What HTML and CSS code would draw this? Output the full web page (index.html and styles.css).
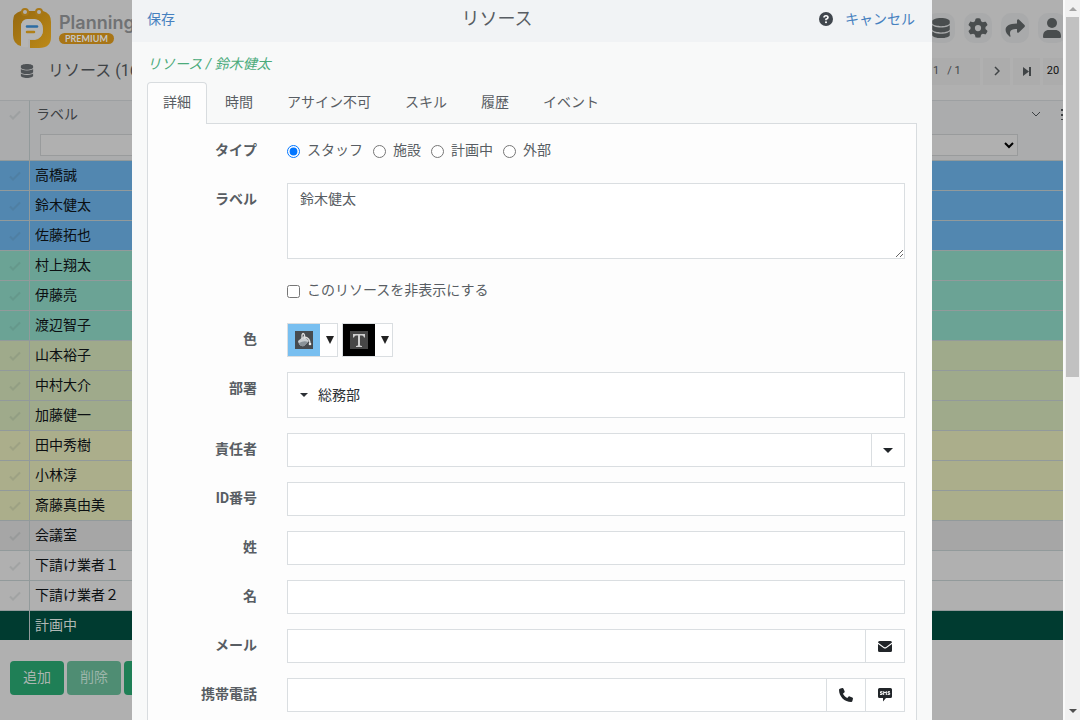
FILE: index.html
```html
<!DOCTYPE html>
<html lang="ja">
<head>
<meta charset="utf-8">
<title>リソース</title>
<link rel="stylesheet" href="styles.css">
</head>
<body>
<svg class="defs" aria-hidden="true">
  <symbol id="db" viewBox="0 0 448 512"><path d="M448 80v48c0 44.200-100.300 80-224 80S0 172.200 0 128V80C0 35.800 100.300 0 224 0s224 35.800 224 80zM393.200 214.700c20.800-7.400 39.900-16.900 54.800-28.600V288c0 44.200-100.300 80-224 80S0 332.200 0 288V186.100c14.900 11.800 34 21.200 54.800 28.600C99.700 230.700 159.500 240 224 240s124.300-9.300 169.200-25.300zM0 346.100c14.900 11.800 34 21.200 54.800 28.600C99.700 390.700 159.500 400 224 400s124.300-9.300 169.200-25.300c20.800-7.400 39.900-16.900 54.800-28.600V432c0 44.200-100.300 80-224 80S0 476.200 0 432V346.100z"/></symbol>
  <symbol id="check" viewBox="0 0 14 12"><path d="M2 6.500 5 9.500 12 2.500" fill="none" stroke="currentColor" stroke-width="2"/></symbol>
</svg>
<div class="window">
  <div class="app">
    <header class="topbar">
      <div class="brand">
        <svg class="logo" viewBox="0 0 38 40" aria-hidden="true">
          <defs><linearGradient id="gold" x1="0" y1="0" x2="1" y2="1"><stop offset="0" stop-color="#95680f"/><stop offset="1" stop-color="#bd8a18"/></linearGradient></defs>
          <path d="M8 3H30Q38 5 38 14V29Q38 40 26 40H17V32H22Q30 30 30 21.500 30 12 21 11H15Q8 12 8 19V38Q0 36 0 27V13Q0 5 8 3Z" fill="url(#gold)"/>
          <path d="M8 38V19Q8 11 15 11H21Q30 12 30 21.500 30 31 21 31H15V39Q10 40 8 38Z" fill="#b5b5b5"/>
          <circle cx="12" cy="4" r="3" fill="#b0b0b0" stroke="#a87818" stroke-width="2"/><circle cx="26" cy="4" r="3" fill="#b0b0b0" stroke="#a87818" stroke-width="2"/>
          <path d="M14 18.500H24" stroke="#2d6ca3" stroke-width="2.500" stroke-linecap="round"/><path d="M14 24H21" stroke="#b08018" stroke-width="2.500" stroke-linecap="round"/>
        </svg>
        <div class="brand-text"><span class="brand-name">Planning</span><span class="premium">PREMIUM</span></div>
      </div>
      <nav class="tools" aria-label="ツール">
        <button aria-label="データ"><svg width="18" height="20"><use href="#db"/></svg></button>
        <button aria-label="設定"><svg width="20" height="20" viewBox="0 0 512 512"><path fill-rule="evenodd" d="M495.900 166.600c3.200 8.700 .5 18.400-6.400 24.600l-43.300 39.400c1.100 8.300 1.700 16.800 1.700 25.400s-.6 17.100-1.700 25.400l43.300 39.400c6.900 6.200 9.600 15.900 6.400 24.600-8 24-22 46-37 66-6 7-16 10-25 7l-55.700-17.700c-13.400 10.300-28.200 18.900-44 25.400l-12.500 57.100c-2 9.100-9 16.300-18.200 17.800-32 5-63 5-95 0-9.200-1.500-16.200-8.700-18.200-17.800l-12.500-57.100c-15.800-6.500-30.600-15.100-44-25.400L78 419c-9 3-19 0-25-7-16-20-28-42-37-66-3.200-8.700-.5-18.400 6.400-24.600l43.300-39.400C64.600 273.100 64 264.600 64 256s.6-17.100 1.700-25.400L22.400 191.200c-6.900-6.200-9.600-15.900-6.400-24.600 9-24 21-46 37-66 6-7 16-10 25-7l55.700 17.700c13.400-10.300 28.200-18.900 44-25.400l12.500-57.100c2-9.100 9-16.300 18.200-17.800 32-5 63-5 95 0 9.200 1.500 16.200 8.700 18.200 17.800l12.500 57.100c15.800 6.500 30.600 15.100 44 25.400L434 94c9-3 19 0 25 7 15 19 28 41 36.900 65.600zM256 336a80 80 0 1 0 0-160 80 80 0 1 0 0 160z"/></svg></button>
        <button aria-label="共有"><svg width="20" height="18" viewBox="0 0 20 18"><path d="M12.500 .5Q13 0 13.800 .5L19.500 6Q20.300 7 19.500 8L13.800 13.500Q12 14.500 12 12.500V10C6 10 4 12 5.500 17 5.500 18 5 18 4.500 17.500-2 12-1 4.500 12 4.500V1.500Z"/></svg></button>
        <button aria-label="ユーザー"><svg width="18" height="20" viewBox="0 0 18 20"><circle cx="9" cy="5" r="5"/><path d="M0 19C0 14 2 12 6 12H12C16 12 18 14 18 19Q18 20 17 20H1Q0 20 0 19Z"/></svg></button>
      </nav>
    </header>
    <div class="subbar">
      <h1><svg class="db-small" width="14" height="14"><use href="#db"/></svg>リソース (16)</h1>
      <div class="pager">
        <span class="cell page"><b>1</b> / 1</span>
        <button class="cell" aria-label="次へ"><svg width="6" height="10" viewBox="0 0 6 10"><path d="M1 1 5 5 1 9" fill="none" stroke="currentColor" stroke-width="1.500"/></svg></button>
        <button class="cell" aria-label="最後へ"><svg width="8" height="9" viewBox="0 0 8 9"><path d="M0 0 6 4.500 0 9ZM6 0H8V9H6Z"/></svg></button>
        <span class="cell size">20</span>
      </div>
    </div>
    <table class="resources">
      <thead>
        <tr>
          <th class="pick"><svg width="14" height="12"><use href="#check"/></svg></th>
          <th><label for="filter">ラベル</label><input id="filter" type="text"></th>
          <th><div class="head-icons"><svg width="10" height="6" viewBox="0 0 10 6"><path d="M1 1 5 5 9 1" fill="none" stroke="currentColor"/></svg><svg width="2" height="12" viewBox="0 0 2 12"><path d="M1 1V12" stroke="currentColor" stroke-width="2" stroke-dasharray="2 3"/></svg></div><select aria-label="絞り込み"><option></option></select></th>
        </tr>
      </thead>
      <tbody>
        <tr class="blue"><td class="pick"><svg width="14" height="12"><use href="#check"/></svg></td><td colspan="2">高橋誠</td></tr>
        <tr class="blue"><td class="pick"><svg width="14" height="12"><use href="#check"/></svg></td><td colspan="2">鈴木健太</td></tr>
        <tr class="blue"><td class="pick"><svg width="14" height="12"><use href="#check"/></svg></td><td colspan="2">佐藤拓也</td></tr>
        <tr class="teal"><td class="pick"><svg width="14" height="12"><use href="#check"/></svg></td><td colspan="2">村上翔太</td></tr>
        <tr class="teal"><td class="pick"><svg width="14" height="12"><use href="#check"/></svg></td><td colspan="2">伊藤亮</td></tr>
        <tr class="teal"><td class="pick"><svg width="14" height="12"><use href="#check"/></svg></td><td colspan="2">渡辺智子</td></tr>
        <tr class="green"><td class="pick"><svg width="14" height="12"><use href="#check"/></svg></td><td colspan="2">山本裕子</td></tr>
        <tr class="green"><td class="pick"><svg width="14" height="12"><use href="#check"/></svg></td><td colspan="2">中村大介</td></tr>
        <tr class="green"><td class="pick"><svg width="14" height="12"><use href="#check"/></svg></td><td colspan="2">加藤健一</td></tr>
        <tr class="yellow"><td class="pick"><svg width="14" height="12"><use href="#check"/></svg></td><td colspan="2">田中秀樹</td></tr>
        <tr class="yellow"><td class="pick"><svg width="14" height="12"><use href="#check"/></svg></td><td colspan="2">小林淳</td></tr>
        <tr class="yellow"><td class="pick"><svg width="14" height="12"><use href="#check"/></svg></td><td colspan="2">斎藤真由美</td></tr>
        <tr class="gray"><td class="pick"><svg width="14" height="12"><use href="#check"/></svg></td><td colspan="2">会議室</td></tr>
        <tr><td class="pick"><svg width="14" height="12"><use href="#check"/></svg></td><td colspan="2">下請け業者１</td></tr>
        <tr><td class="pick"><svg width="14" height="12"><use href="#check"/></svg></td><td colspan="2">下請け業者２</td></tr>
        <tr class="dark"><td class="pick"></td><td colspan="2">計画中</td></tr>
      </tbody>
    </table>
    <div class="actions"><button>追加</button><button disabled>削除</button><button aria-label="その他"></button></div>
  </div>

  <section class="dialog" role="dialog" aria-labelledby="dialog-title">
    <header class="dialog-head">
      <a href="#save">保存</a>
      <h2 id="dialog-title">リソース</h2>
      <div class="head-end">
        <svg width="14" height="14" viewBox="0 0 14 14" aria-hidden="true"><circle cx="7" cy="7" r="7" fill="#40464d"/><path d="M5 5.500Q5 3.700 7 3.700T9 5.500Q9 6.500 7 7.200V8.300" fill="none" stroke="#fff" stroke-width="1.600"/><circle cx="7" cy="10.300" r="1" fill="#fff"/></svg>
        <a href="#cancel">キャンセル</a>
      </div>
    </header>
    <div class="dialog-body">
      <p class="crumb">リソース / 鈴木健太</p>
      <nav class="tabs">
        <a class="active" href="#detail">詳細</a><a href="#time">時間</a><a href="#off">アサイン不可</a><a href="#skill">スキル</a><a href="#history">履歴</a><a href="#event">イベント</a>
      </nav>
      <form class="panel">
        <div class="row">
          <span class="name" id="type">タイプ</span>
          <div class="choices" role="radiogroup" aria-labelledby="type">
            <label><input type="radio" name="type" checked>スタッフ</label>
            <label><input type="radio" name="type">施設</label>
            <label><input type="radio" name="type">計画中</label>
            <label><input type="radio" name="type">外部</label>
          </div>
        </div>
        <div class="row"><label class="name" for="label">ラベル</label><textarea id="label" class="box">鈴木健太</textarea></div>
        <div class="row"><span></span><div class="choices"><label><input type="checkbox">このリソースを非表示にする</label></div></div>
        <div class="row">
          <span class="name">色</span>
          <div class="colors">
            <button type="button" class="picker" aria-label="背景色"><span class="swatch fill"><svg width="18" height="18" viewBox="0 0 18 18"><path d="M0 0H18V18H0Z" fill="#474b4f"/><path d="M3 10 9 5 14 10 9 15Q4 16 3 10Z" fill="#c9cdd0"/><path d="M4 12Q9 9 13 11L9 15Q5 16 4 12Z" fill="#8a9298"/><path d="M7 8V4Q8 1 9.500 4V8M10 6Q15 7 15 13" fill="none" stroke="#ddd" stroke-width="1.300"/><circle cx="15" cy="13" r="1.300" fill="#eee"/></svg></span><span class="drop"><svg width="8" height="8" viewBox="0 0 8 8"><path d="M0 0H8L4 8Z"/></svg></span></button>
            <button type="button" class="picker" aria-label="文字色"><span class="swatch ink"><svg width="18" height="18" viewBox="0 0 18 18"><path d="M0 0H18V18H0Z" fill="#474747"/><path d="M3 3H15V6.500H14Q13.500 4.500 12 4.500H10V14Q10 15 12 15V16H6V15Q8 15 8 14V4.500H6Q4.500 4.500 4 6.500H3Z" fill="#d0d0d0"/></svg></span><span class="drop"><svg width="8" height="8" viewBox="0 0 8 8"><path d="M0 0H8L4 8Z"/></svg></span></button>
          </div>
        </div>
        <div class="row"><span class="name">部署</span><button type="button" class="box tree"><svg width="8" height="4" viewBox="0 0 8 4"><path d="M0 0H8L4 4Z"/></svg>総務部</button></div>
        <div class="row"><label class="name" for="owner">責任者</label><div class="group"><input id="owner" class="box" type="text"><button type="button" class="box narrow" aria-label="選択"><svg width="10" height="5" viewBox="0 0 10 5"><path d="M0 0H10L5 5Z"/></svg></button></div></div>
        <div class="row"><label class="name" for="code">ID番号</label><input id="code" class="box" type="text"></div>
        <div class="row"><label class="name" for="last">姓</label><input id="last" class="box" type="text"></div>
        <div class="row"><label class="name" for="first">名</label><input id="first" class="box" type="text"></div>
        <div class="row"><label class="name" for="mail">メール</label><div class="group"><input id="mail" class="box" type="email"><button type="button" class="box addon" aria-label="メール送信"><svg width="14" height="11" viewBox="0 0 14 11"><path d="M1.500 0H12.500Q14 0 14 1.500L8 6Q7 6.700 6 6L0 1.500Q0 0 1.500 0ZM0 3 5.500 7Q7 8 8.500 7L14 3V9.500Q14 11 12.500 11H1.500Q0 11 0 9.500Z"/></svg></button></div></div>
        <div class="row"><label class="name" for="mobile">携帯電話</label><div class="group"><input id="mobile" class="box" type="tel"><button type="button" class="box addon" aria-label="電話"><svg width="14" height="14" viewBox="0 0 512 512"><path d="M164.900 24.600c-7.700-18.600-28-28.500-47.400-23.200l-88 24C12.100 30.200 0 46 0 64c0 247.400 200.600 448 448 448 18 0 33.800-12.100 38.600-29.500l24-88c5.300-19.400-4.600-39.700-23.200-47.400l-96-40c-16.300-6.800-35.200-2.100-46.300 11.600L304.700 368C234.300 334.700 177.300 277.700 144 207.300L193.300 167c13.700-11.200 18.400-30 11.600-46.300l-40-96z"/></svg></button><button type="button" class="box addon" aria-label="SMS"><svg width="14" height="14" viewBox="0 0 14 14"><path d="M1.500 0H12.500Q14 0 14 1.500V8.500Q14 10 12.500 10H8L5 13.500V10H1.500Q0 10 0 8.500V1.500Q0 0 1.500 0Z"/><path d="M4.500 3.700H2.500V5H4.200V6.400H2M5.700 7V3.500L7 5 8.300 3.500V7M12 3.700H10V5H11.700V6.400H9.500" fill="none" stroke="#fff" stroke-width="1"/></svg></button></div></div>
      </form>
    </div>
  </section>
  <div class="scrollbar" aria-hidden="true">
    <svg width="8" height="4" viewBox="0 0 8 4"><path d="M0 4H8L4 0Z" fill="#a3a3a3"/></svg>
    <div class="thumb"></div>
    <svg width="8" height="4" viewBox="0 0 8 4"><path d="M0 0H8L4 4Z" fill="#505050"/></svg>
  </div>
</div>
</body>
</html>
```

FILE: styles.css
```css
* { box-sizing: border-box; }
body { margin: 0; font: 14px/20px Roboto, "Noto Sans CJK JP", sans-serif; color: #585d63; }
button, input, textarea, select { font: inherit; color: inherit; }
button { cursor: pointer; }
a { text-decoration: none; }
svg { fill: currentColor; flex: none; }
.defs { display: none; }

.window { display: grid; grid-template: 100vh / minmax(0, 1fr) 17px; overflow: hidden; }
.app { grid-area: 1 / 1; overflow: hidden; background: #b0b0b0; }
.dialog { grid-area: 1 / 1; z-index: 1; justify-self: center; width: 100%; max-width: 800px; margin-left: 1px; overflow: hidden; background: #f8f9f9; }

/* Top bar */
.topbar { display: flex; justify-content: space-between; align-items: center; height: 56px; padding-left: 13px; }
.brand { display: flex; gap: 8px; align-items: center; }
.logo { width: 38px; height: 40px; }
.brand-text { display: flex; flex-direction: column; align-items: flex-start; }
.brand-name { font: 600 18px/20px Inter, sans-serif; color: #707274; }
.premium { padding: 0 6px; border-radius: 6px; background: #a87516; color: #c4c4c4; font: bold 9px/11px Lato, sans-serif; }
.tools { display: flex; gap: 9px; overflow: hidden; margin-right: -3px; }
.tools button { display: grid; place-items: center; width: 28px; height: 30px; padding: 0; border: 0; border-radius: 10px; background: #a9aaab; color: #494d4e; }
.subbar { display: flex; justify-content: space-between; align-items: center; height: 44px; padding: 0 0 14px 20px; }
.subbar h1 { display: flex; align-items: center; gap: 14px; margin: 0; font-size: 16px; font-weight: 400; color: #3f4346; }
.db-small { color: #4f5356; }
.pager { display: flex; gap: 3px; font-size: 11px; color: #404446; }
.cell { display: grid; place-items: center; width: 27px; height: 27px; padding: 0; border: 0; background: #acacac; }
.page { display: flex; align-items: center; width: 56px; padding-left: 9px; gap: 8px; }
.page b { font-weight: 400; }
.size { width: 20px; color: #111; }

/* Resource list */
.resources { width: 100%; table-layout: fixed; border-collapse: separate; border-spacing: 0; color: #0b0f12; }
.resources th { height: 60px; padding: 3px 0 3px 6px; border: 1px solid #9da0a2; border-width: 1px 1px 0 0; background: #abacad; text-align: left; vertical-align: top; font-weight: 400; color: #3c4043; }
.resources th:last-child { border-right: 0; padding-left: 10px; }
.resources th label { display: block; }
.resources th input { width: 90%; height: 22px; margin: 10px 0 0 4px; border: 1px solid #999b9c; background: #b0b0b0; }
.resources th select { width: calc(100% - 45px); height: 22px; margin-top: 10px; border: 1px solid #999b9c; background: #b0b0b0; color: #000; }
.head-icons { display: flex; justify-content: flex-end; align-items: center; gap: 20px; height: 20px; }
.resources td { height: 30px; padding: 0 5px 2px; border-top: 1px solid #929a9b; line-height: 20px; }
.resources .pick { width: 30px; padding: 8px; border-right: 1px solid #929a9b; color: rgba(60, 70, 75, .12); line-height: 0; }
.resources td.pick { padding: 0 8px; }
.blue { background: #5287b0; }
.teal { background: #6ba395; }
.green { background: #9faa8b; }
.yellow { background: #abae8b; }
.gray { background: #a6a6a6; }
.resources .dark { background: #003b30; color: #b0b8b5; }
.actions { display: flex; gap: 3px; padding: 21px 10px; }
.actions button { width: 54px; height: 34px; padding: 0 0 2px; border: 0; border-radius: 4px; background: #1f7f56; color: #aab5b0; }
.actions button:disabled { background: #4f8d73; color: #9cb5aa; }

/* Dialog */
.dialog-head { display: flex; justify-content: space-between; align-items: center; height: 42px; padding: 0 17px 4px 15px; background: #f1f3f5; }
.dialog-head h2 { margin: 0; font-size: 18px; font-weight: 400; }
.dialog-head a { color: #4680bf; }
.head-end { display: flex; align-items: center; gap: 12px; }
.dialog-body { padding: 12px 15px 0; }
.crumb { margin: 0 0 8px; font-style: italic; color: #4bab7b; }
.tabs { display: flex; gap: 2px; }
.tabs a { padding: 9px 15px 11px; border: 1px solid transparent; border-bottom: 0; border-radius: 4px 4px 0 0; color: #585d63; }
.tabs .active { border-color: #d8dcdf; background: #fdfdfd; margin-bottom: -1px; z-index: 1; }
.panel { display: flex; flex-direction: column; gap: 15px; padding: 10px 11px 15px 0; border: 1px solid #d8dcdf; background: #fdfdfd; }
.row { display: grid; grid-template-columns: 109px minmax(0, 1fr); column-gap: 30px; min-height: 34px; }
.name { padding-top: 6px; text-align: right; font-weight: 700; }
.box { width: 100%; min-height: 34px; margin: 0; padding: 5px 12px; border: 1px solid #dadee1; border-radius: 0; background: #fff; }
textarea.box { display: block; height: 76px; resize: vertical; }
.choices { display: flex; align-items: center; gap: 10px; padding-bottom: 2px; }
.choices label { display: flex; align-items: center; gap: 7px; }
.choices input { width: 13px; height: 13px; margin: 2px 0 0; }
.colors { display: flex; gap: 4px; }
.picker { display: flex; height: 34px; padding: 0; border: 1px solid #dadee1; background: #fff; color: #222; }
.swatch { display: grid; place-items: center; width: 32px; height: 32px; }
.fill { background: #78bff0; }
.ink { background: #000; }
.drop { display: grid; place-items: center; width: 17px; height: 32px; padding-left: 3px; }
.tree { display: flex; align-items: center; gap: 10px; height: 46px; color: #2c3035; }
.group { display: flex; }
.group button { display: grid; place-items: center; flex: none; padding: 0; border-left: 0; color: #212529; }
.group .narrow { width: 33px; }
.group .addon { width: 39px; }

/* Page scroll bar */
.scrollbar { display: flex; flex-direction: column; align-items: center; justify-content: space-between; padding: 7px 0; border-left: 2px solid #fafafa; background: #f1f1f1; }
.thumb { width: 13px; height: 50vh; margin: 6px 0 auto; background: #c1c1c1; }
```
